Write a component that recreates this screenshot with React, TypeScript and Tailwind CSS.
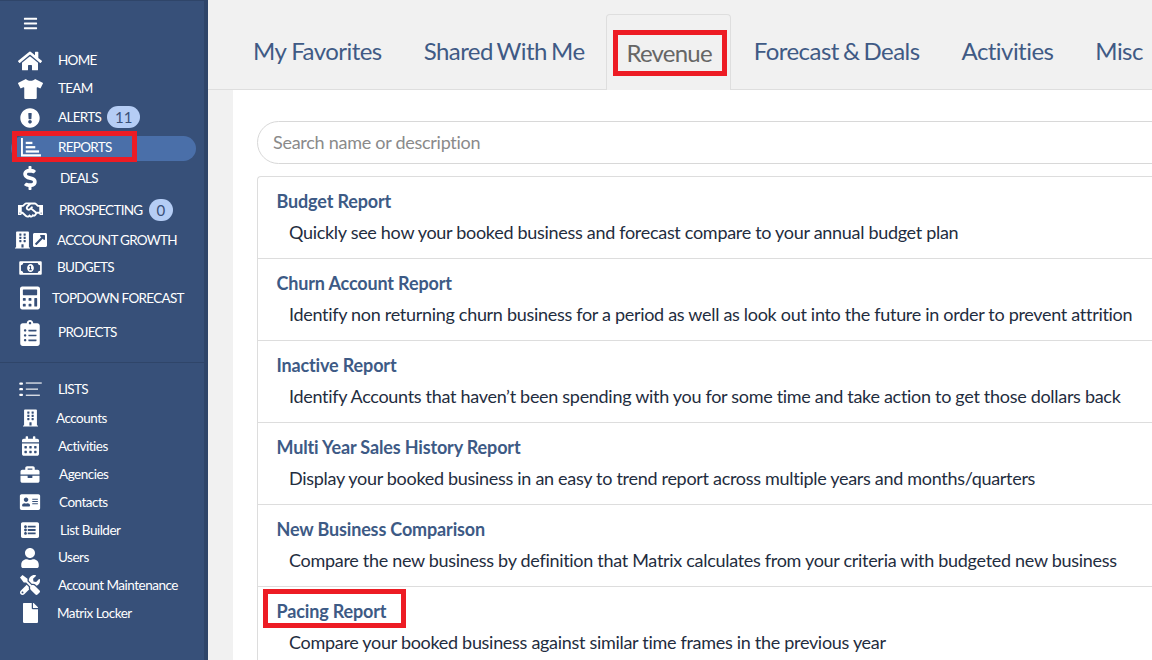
import type { ComponentType, ReactNode } from 'react'
import {
  FaAddressCard,
  FaBars,
  FaBriefcase,
  FaBuilding,
  FaCalculator,
  FaCalendarAlt,
  FaClipboardList,
  FaDollarSign,
  FaExternalLinkSquareAlt,
  FaExclamationCircle,
  FaFile,
  FaHome,
  FaListAlt,
  FaRegHandshake,
  FaRegMoneyBillAlt,
  FaTools,
  FaTshirt,
  FaUser,
} from 'react-icons/fa'

interface NavRow {
  label: string
  icon: ComponentType<{ className?: string }> | (() => ReactNode)
  row: string
  text: string
  iconCls: string
  badge?: string
  active?: boolean
  small?: boolean
}

const ReportsIcon = () => (
  <svg viewBox="0 0 22 20" className="w-[21px] h-[19px]" fill="white">
    <path d="M1 0h2v17h19v2.5H1z" />
    <rect x="6" y="4" width="7" height="2.4" />
    <rect x="6" y="8.5" width="10" height="2.4" />
    <rect x="6" y="13" width="14" height="2.4" />
  </svg>
)

const ListsIcon = () => (
  <svg viewBox="0 0 24 16" className="w-[23px] h-[15px]" fill="white">
    <rect x="0" y="0.5" width="4" height="2.4" rx="1" />
    <rect x="0" y="6.5" width="4" height="2.4" rx="1" />
    <rect x="0" y="12.5" width="4" height="2.4" rx="1" />
    <rect x="7" y="0.5" width="17" height="1.2" />
    <rect x="7" y="7" width="13" height="1.2" />
    <rect x="7" y="13.5" width="15" height="1.2" />
  </svg>
)

const GrowthIcon = () => (
  <span className="flex items-center gap-[2px] ml-[3px]">
    <FaBuilding className="w-[15px] h-[18px] text-white" />
    <FaExternalLinkSquareAlt className="w-[16px] h-[16px] text-white" />
  </span>
)

const topNav: NavRow[] = [
  { label: 'HOME', icon: FaHome, row: 'h-[28px]', text: 'ml-[6px]', iconCls: 'w-[24px] h-[22px] mt-[1px]' },
  { label: 'TEAM', icon: FaTshirt, row: 'h-[28px]', text: 'ml-[6px]', iconCls: 'w-[25px] h-[20px] mt-[1px]' },
  { label: 'ALERTS', icon: FaExclamationCircle, row: 'h-[30px]', text: 'ml-[6px]', iconCls: 'w-[20px] h-[20px] mt-[1px]', badge: '11' },
  { label: 'REPORTS', icon: ReportsIcon, row: 'h-[30px]', text: 'ml-[6px]', iconCls: '', active: true },
  { label: 'DEALS', icon: FaDollarSign, row: 'h-[32px]', text: 'ml-[8px]', iconCls: 'w-[24px] h-[24px]' },
  { label: 'PROSPECTING', icon: FaRegHandshake, row: 'h-[32px]', text: 'ml-[7px]', iconCls: 'w-[25px] h-[20px]', badge: '0' },
  { label: 'ACCOUNT GROWTH', icon: GrowthIcon, row: 'h-[28px]', text: 'ml-[5px]', iconCls: '' },
  { label: 'BUDGETS', icon: FaRegMoneyBillAlt, row: 'h-[26px]', text: 'ml-[5px]', iconCls: 'w-[23px] h-[18px] mt-[1px]' },
  { label: 'TOPDOWN FORECAST', icon: FaCalculator, row: 'h-[36px]', text: 'ml-[0px]', iconCls: 'w-[20px] h-[26px]' },
  { label: 'PROJECTS', icon: FaClipboardList, row: 'h-[32px]', text: 'ml-[6px]', iconCls: 'w-[20px] h-[26px] mt-[1px]' },
]

const listNav: NavRow[] = [
  { label: 'LISTS', icon: ListsIcon, row: 'h-[29px]', text: 'ml-[6px]', iconCls: '' },
  { label: 'Accounts', icon: FaBuilding, row: 'h-[28px]', text: 'ml-[4px]', iconCls: 'w-[15px] h-[20px]', small: true },
  { label: 'Activities', icon: FaCalendarAlt, row: 'h-[28px]', text: 'ml-[6px]', iconCls: 'w-[17px] h-[20px]', small: true },
  { label: 'Agencies', icon: FaBriefcase, row: 'h-[28px]', text: 'ml-[7px]', iconCls: 'w-[20px] h-[19px]', small: true },
  { label: 'Contacts', icon: FaAddressCard, row: 'h-[28px]', text: 'ml-[7px]', iconCls: 'w-[22px] h-[18px]', small: true },
  { label: 'List Builder', icon: FaListAlt, row: 'h-[28px]', text: 'ml-[8px]', iconCls: 'w-[20px] h-[18px]', small: true },
  { label: 'Users', icon: FaUser, row: 'h-[27px]', text: 'ml-[6px]', iconCls: 'w-[18px] h-[20px]', small: true },
  { label: 'Account Maintenance', icon: FaTools, row: 'h-[28px]', text: 'ml-[6px]', iconCls: 'w-[20px] h-[20px]', small: true },
  { label: 'Matrix Locker', icon: FaFile, row: 'h-[28px]', text: 'ml-[5px]', iconCls: 'w-[15px] h-[20px]', small: true },
]

const tabs = ['My Favorites', 'Shared With Me', 'Revenue', 'Forecast & Deals', 'Activities', 'Misc']

const reports = [
  ['Budget Report', 'Quickly see how your booked business and forecast compare to your annual budget plan'],
  ['Churn Account Report', 'Identify non returning churn business for a period as well as look out into the future in order to prevent attrition'],
  ['Inactive Report', 'Identify Accounts that haven’t been spending with you for some time and take action to get those dollars back'],
  ['Multi Year Sales History Report', 'Display your booked business in an easy to trend report across multiple years and months/quarters'],
  ['New Business Comparison', 'Compare the new business by definition that Matrix calculates from your criteria with budgeted new business'],
  ['Pacing Report', 'Compare your booked business against similar time frames in the previous year'],
]

const NavItem = ({ item }: { item: NavRow }) => {
  const Icon = item.icon as ComponentType<{ className?: string }>
  return (
    <div className={`relative flex items-center ${item.row}`}>
      {item.active && (
        <>
          <div className="absolute left-[11px] w-[185px] h-[25px] top-[4px] rounded-full bg-[#4a6fa9]" />
          <div className="absolute left-[12px] top-[-1px] w-[125px] h-[31px] border-[5px] border-[#ed1c24]" />
        </>
      )}
      <div className="relative w-[44px] ml-[8px] flex justify-center text-white">
        <Icon className={item.iconCls} />
      </div>
      <span className={`relative whitespace-nowrap text-white text-[13.5px] ${item.small ? 'tracking-[-0.5px]' : 'tracking-[-0.7px]'} ${item.text}`}>
        {item.label}
      </span>
      {item.badge && (
        <span className="relative ml-[6px] h-[22px] px-[8px] rounded-full bg-[#b5cdf5] text-[#3a5078] text-[15px] flex items-center">
          {item.badge}
        </span>
      )}
    </div>
  )
}

const App = () => {
  return (
    <div className="flex h-[660px] w-[1152px] overflow-hidden bg-[#f1f1f1] font-['Lato','Liberation_Sans',sans-serif]">
      {/* Sidebar */}
      <aside className="flex flex-col w-[208px] shrink-0 bg-[#375079] border-r-[4px] border-[#2f4569] border-t border-t-[#2f4569]">
        <div className="h-[45px] shrink-0 flex items-center pl-[23px]">
          <FaBars className="w-[15px] h-[15px] text-white" />
        </div>
        {topNav.map((item) => (
          <NavItem key={item.label} item={item} />
        ))}
        <div className="mt-[14px] mb-[12px] h-px bg-[#2f4569]" />
        {listNav.map((item) => (
          <NavItem key={item.label} item={item} />
        ))}
      </aside>

      {/* Main */}
      <main className="flex flex-col w-[944px] shrink-0">
        <div className="h-[90px] shrink-0 flex items-end pl-[24px] border-b border-[#dedede]">
          {tabs.map((tab) =>
            tab === 'Revenue' ? (
              <div
                key={tab}
                className="relative h-[76px] -mb-px mr-[2px] flex items-center pl-[20px] pr-[18px] text-[24px] tracking-[-0.8px] text-[#666666] bg-[#f1f1f1] border border-b-0 border-[#dedede] rounded-t-[4px]"
              >
                {tab}
                <div className="absolute left-[6px] top-[15px] w-[114px] h-[46px] border-[5px] border-[#ed1c24]" />
              </div>
            ) : (
              <div
                key={tab}
                className={`h-[76px] flex items-center px-[21px] text-[24px] tracking-[-0.55px] text-[#3f5a85] whitespace-nowrap ${
                  tab === 'My Favorites' ? '' : '[word-spacing:-1.5px]'
                }`}
              >
                {tab}
              </div>
            ),
          )}
        </div>

        <div className="flex-1 ml-[25px] bg-white pl-[24px] pt-[31px] w-[1000px]">
          <div className="h-[43px] flex items-center pl-[15px] rounded-full border border-[#d8d8d8] text-[18px] tracking-[-0.27px] text-[#8a8a8a]">
            Search name or description
          </div>
          <div className="mt-[12px] border-l border-t border-[#dddddd] rounded-tl-[4px]">
            {reports.map(([title, desc]) => (
              <div key={title} className="relative h-[82px] border-b border-[#dddddd] pl-[18.5px] pt-[12px]">
                <div className="text-[18px] leading-[25px] font-bold tracking-[-0.15px] text-[#3d5a85]">{title}</div>
                <div className="mt-[6px] ml-[12.5px] text-[18px] leading-[25px] tracking-[-0.3px] text-[#1f2d40] whitespace-nowrap">{desc}</div>
                {title === 'Pacing Report' && (
                  <div className="absolute left-[5px] top-[2px] w-[143px] h-[39px] border-[5px] border-[#ed1c24]" />
                )}
              </div>
            ))}
          </div>
        </div>
      </main>
    </div>
  )
}

export default App
